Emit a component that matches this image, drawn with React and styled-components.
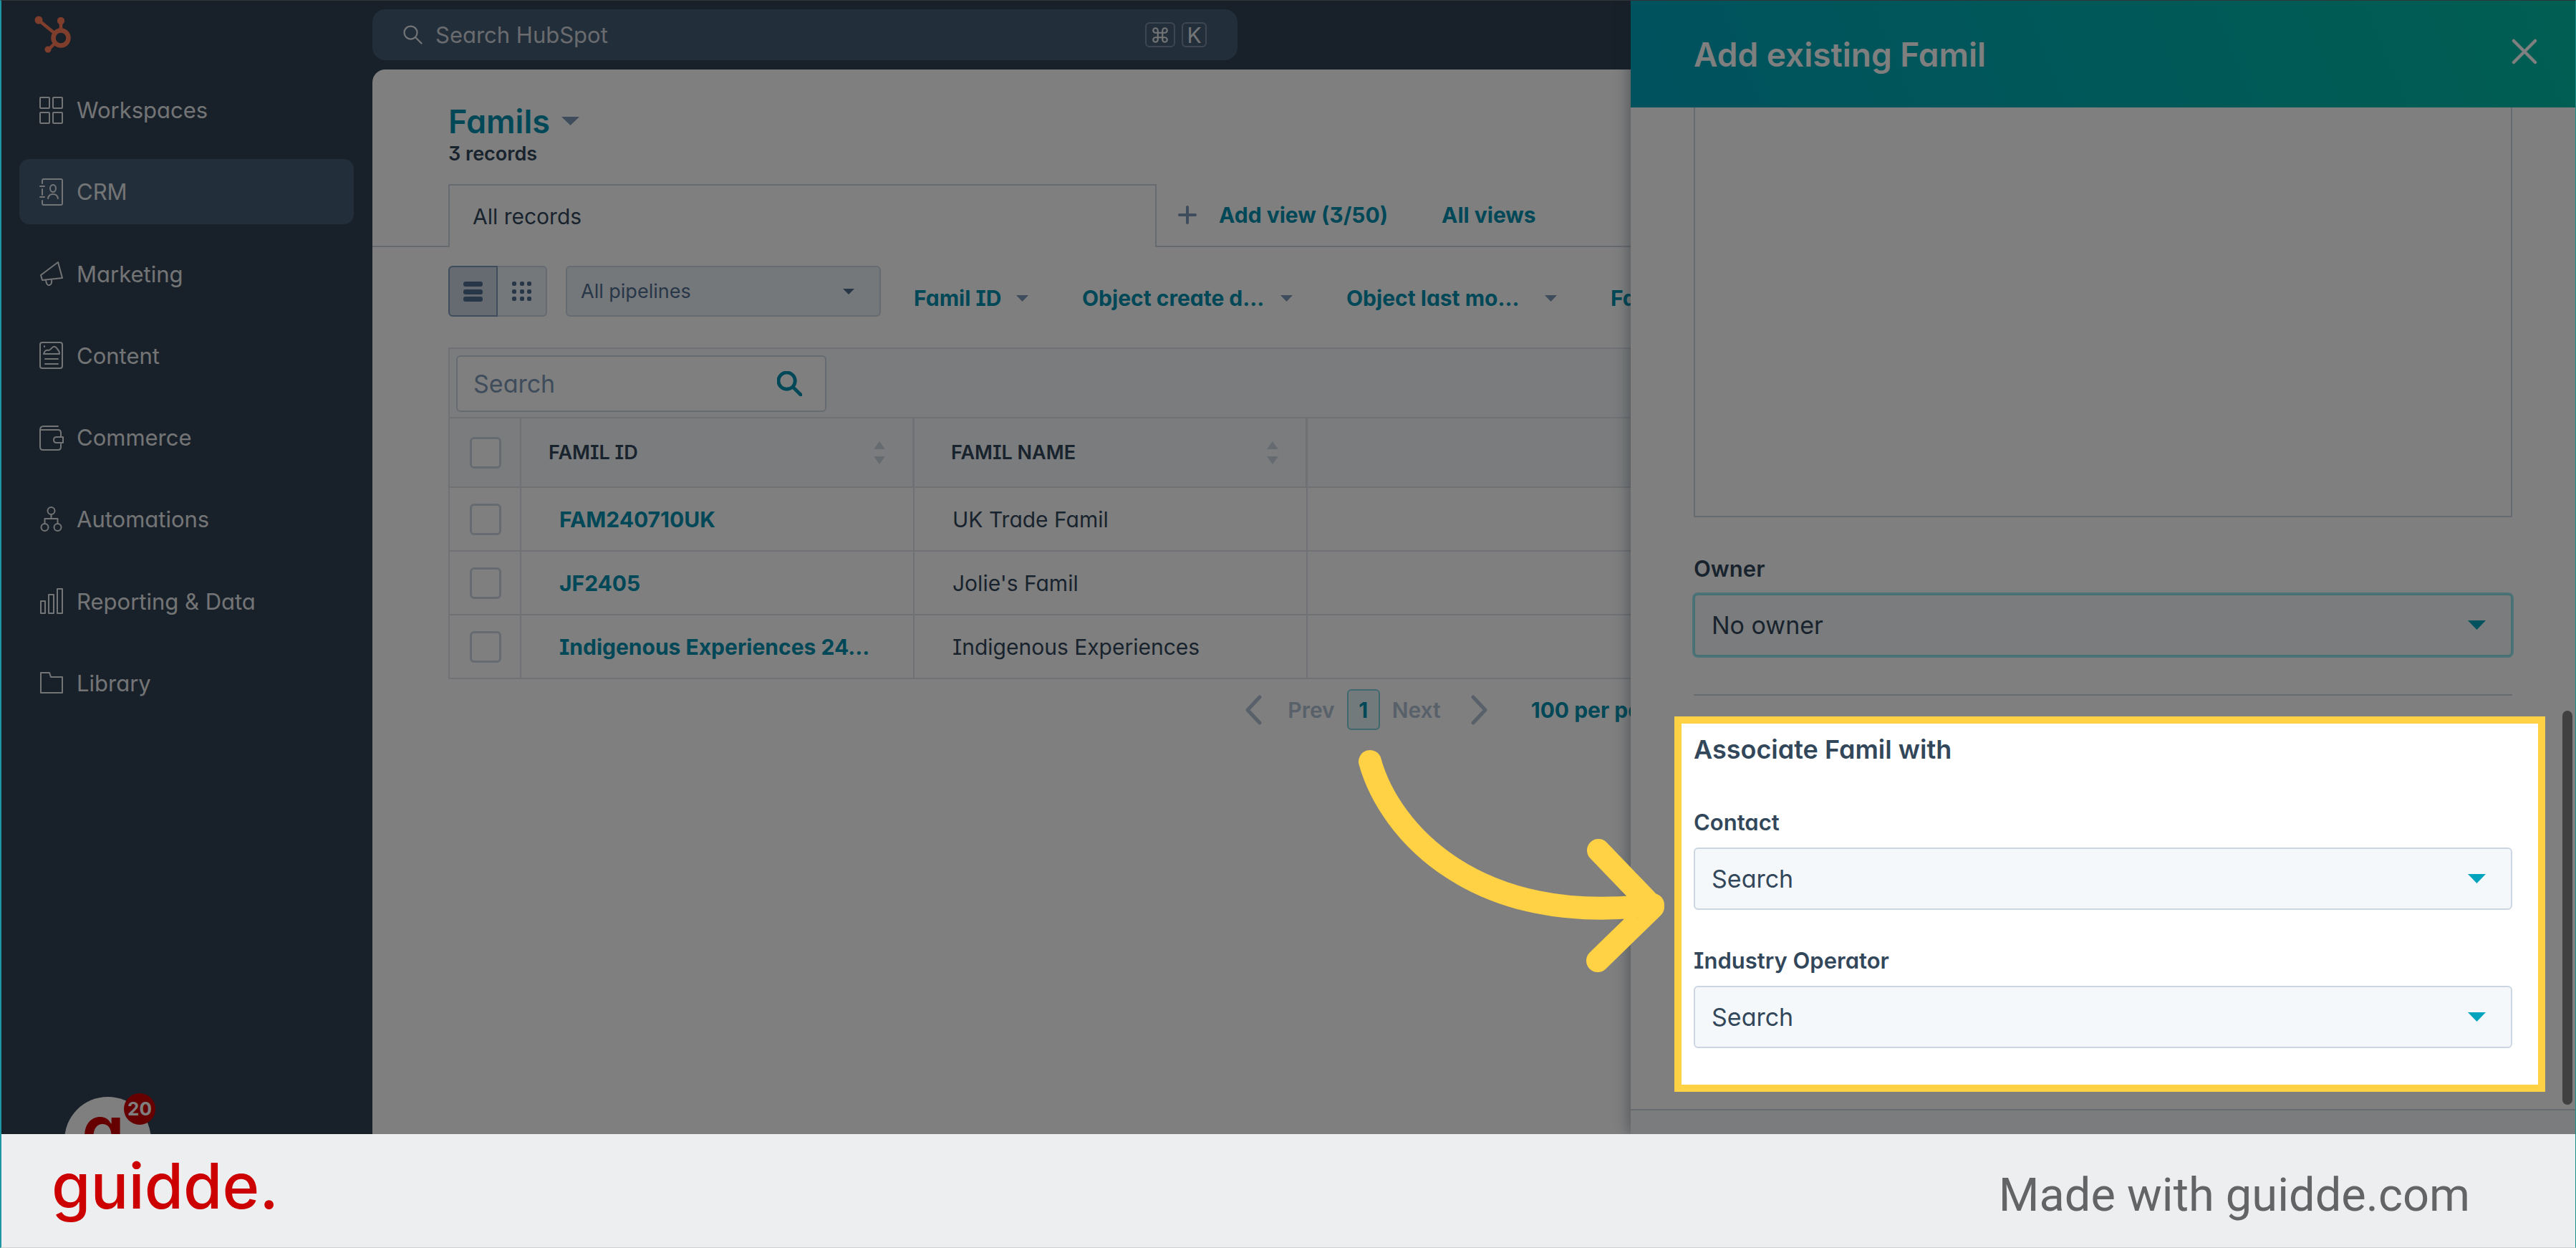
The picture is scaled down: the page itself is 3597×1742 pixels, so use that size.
import React from "react";
import styled, { createGlobalStyle, css } from "styled-components";
import { Command } from "lucide-react";

const c = {
  navy: "#304152",
  slate: "#445c74",
  ink: "#33475b",
  teal: "#0091ae",
  aqua: "#00a4bd",
  line: "#cbd6e2",
  hair: "#dfe3eb",
  panel: "#f5f8fa",
  muted: "#7c98b6",
  snow: "#e6e8eb",
  yellow: "#ffd144",
  red: "#cc0000",
};

const Global = createGlobalStyle`
  * { box-sizing: border-box; }
  body { margin: 0; background: #fff; }
  body, button, input, select, textarea {
    font-family: Inter, "Open Sans", sans-serif;
    font-feature-settings: "cv08", "cv09", "cv11";
  }
`;

const buttonReset = css`
  border: 0;
  padding: 0;
  background: none;
  color: inherit;
  cursor: pointer;
`;

const Page = styled.div`
  display: flex;
  flex-direction: column;
  height: 100vh;
  overflow: hidden;
  border: solid;
  border-width: 1px 1px 1px 2px;
  border-color: #2f3538 #1d8f8a #cfd1d3 #1d95a2;
`;

const Workspace = styled.div`
  position: relative;
  flex: 1;
  min-height: 0;
  display: flex;
  overflow: hidden;
  background: ${c.navy};
  color: ${c.ink};
`;

/* ---------- sidebar ---------- */

const Sidebar = styled.aside`
  flex: none;
  width: 518px;
  padding: 21px 26px 0 25px;
`;

const Logo = styled.a`
  display: block;
  height: 52px;
  margin: 0 0 34px 20px;
`;

const NavList = styled.nav`
  display: flex;
  flex-direction: column;
  justify-content: space-between;
  height: 891px;
`;

const NavItem = styled.a`
  display: flex;
  align-items: center;
  gap: 18px;
  height: 91px;
  padding: 0 28px;
  border-radius: 14px;
  background: ${(p) => (p.$active ? c.slate : "transparent")};
  color: ${c.snow};
  font-size: 31px;
  text-decoration: none;
`;

const NavIcon = styled.svg`
  flex: none;
  width: 34px;
  height: 38px;
  fill: none;
  stroke: currentColor;
  stroke-width: 2;
  stroke-linejoin: round;
  stroke-linecap: round;
`;

const Assistant = styled.button`
  ${buttonReset}
  position: absolute;
  left: 88px;
  bottom: -69px;
  width: 121px;
  height: 121px;
  padding-right: 13px;
  border-radius: 50%;
  background: #fff;
  color: ${c.red};
  font-size: 96px;
  font-weight: 600;
  line-height: 56px;
  padding-bottom: 30px;
`;

const Badge = styled.span`
  position: absolute;
  top: -5px;
  right: -6px;
  width: 44px;
  height: 44px;
  border-radius: 50%;
  background: ${c.red};
  color: #fff;
  font-size: 26px;
  font-weight: 700;
  line-height: 44px;
  text-align: center;
`;

/* ---------- top bar ---------- */

const Column = styled.div`
  flex: 1;
  min-width: 0;
  display: flex;
  flex-direction: column;
`;

const TopBar = styled.header`
  flex: none;
  height: 96px;
  padding-top: 12px;
`;

const GlobalSearch = styled.label`
  display: flex;
  align-items: center;
  width: 1208px;
  height: 71px;
  padding: 0 43px;
  border-radius: 18px;
  background: ${c.slate};
  color: ${c.snow};
`;

const GlobalInput = styled.input`
  flex: 1;
  min-width: 0;
  margin-left: 18px;
  padding: 0;
  border: 0;
  outline: 0;
  background: none;
  font-size: 31px;
  &::placeholder { color: #d3d7dc; opacity: 1; }
`;

const Key = styled.kbd`
  display: flex;
  align-items: center;
  justify-content: center;
  width: ${(p) => p.$w}px;
  height: 35px;
  margin-left: 9px;
  border: 2px solid #7c8fa3;
  border-radius: 6px;
  font: 30px Inter, sans-serif;
`;

/* ---------- main ---------- */

const Main = styled.main`
  flex: 1;
  min-height: 0;
  background: #fff;
  border-top-left-radius: 18px;
  overflow: hidden;
`;

const Heading = styled.div`
  padding: 46px 0 24px 106px;
`;

const TitleButton = styled.button`
  ${buttonReset}
  display: flex;
  align-items: center;
  gap: 16px;
  height: 52px;
  color: ${c.teal};
  font-size: 45px;
  font-weight: 600;
`;

const Count = styled.div`
  margin-top: 2px;
  font-size: 27px;
  font-weight: 600;
  line-height: 36px;
`;

const TabRow = styled.div`
  display: flex;
  height: 88px;
  font-size: 31px;
`;

const TabLead = styled.div`
  flex: none;
  width: 106px;
  border-bottom: 2px solid ${c.line};
`;

const Tab = styled.button`
  ${buttonReset}
  width: 989px;
  padding: 0 32px;
  border: 2px solid ${c.line};
  border-bottom: 0;
  font-size: 30px;
  text-align: left;
`;

const TabRest = styled.div`
  flex: 1;
  display: flex;
  align-items: center;
  gap: 75px;
  padding-left: 30px;
  border-bottom: 2px solid ${c.line};
`;

const LinkButton = styled.button`
  ${buttonReset}
  display: flex;
  align-items: center;
  justify-content: space-between;
  width: ${(p) => (p.$w ? p.$w + "px" : "auto")};
  height: 52px;
  color: ${c.teal};
  font-size: 30px;
  font-weight: 700;
  white-space: nowrap;
`;

const Toolbar = styled.div`
  display: flex;
  align-items: flex-end;
  height: 71px;
  margin: 26px 0 43px 106px;
`;

const ToggleGroup = styled.div`
  display: flex;
  margin-right: 26px;
`;

const ViewToggle = styled.button`
  ${buttonReset}
  display: flex;
  align-items: center;
  justify-content: center;
  width: 69px;
  height: 71px;
  border: 2px solid ${(p) => (p.$on ? c.muted : c.line)};
  border-left-width: ${(p) => (p.$on ? 2 : 0)}px;
  border-radius: ${(p) => (p.$on ? "6px 0 0 6px" : "0 6px 6px 0")};
  background: ${(p) => (p.$on ? c.line : "#eaf0f6")};
  color: #506e91;
`;

const SelectBox = styled.div`
  position: relative;
  display: flex;
  align-items: center;
  width: ${(p) => (p.$w ? p.$w + "px" : "100%")};
`;

const CaretSlot = styled.span`
  position: absolute;
  right: 37px;
  display: flex;
  color: ${(p) => p.$color};
  pointer-events: none;
`;

const Picker = styled.select`
  appearance: none;
  width: 100%;
  height: ${(p) => (p.$small ? 71 : 87)}px;
  padding: 0 80px 0 ${(p) => (p.$small ? 19 : 23)}px;
  border: 2px solid ${(p) => (p.$focus ? "#8fe0ea" : c.line)};
  border-radius: 6px;
  outline: 0;
  background: ${(p) => (p.$small ? "#eaf0f6" : c.panel)};
  box-shadow: ${(p) => (p.$focus ? "0 0 0 2px #9be5ee" : "none")};
  color: ${(p) => (p.$small ? "#506e91" : c.ink)};
  font-size: ${(p) => (p.$small ? 27 : 34)}px;
`;

const Filters = styled.div`
  display: flex;
  gap: 75px;
  margin-left: 46px;
`;

/* ---------- records table ---------- */

const TableFrame = styled.div`
  margin: 0 60px 0 106px;
  border: 2px solid ${c.hair};
  border-bottom: 0;
`;

const TableTools = styled.div`
  height: 97px;
  padding: 9px;
  background: ${c.panel};
  border-bottom: 2px solid ${c.hair};
`;

const TableSearch = styled.label`
  display: flex;
  align-items: center;
  width: 517px;
  height: 79px;
  padding: 0 32px 0 22px;
  border: 2px solid ${c.line};
  border-radius: 6px;
  background: #fff;
  color: ${c.teal};
`;

const TableInput = styled.input`
  flex: 1;
  min-width: 0;
  padding: 0;
  border: 0;
  outline: 0;
  background: none;
  font-size: 34px;
  &::placeholder { color: ${c.muted}; opacity: 1; }
`;

const Table = styled.table`
  width: 100%;
  table-layout: fixed;
  border-collapse: separate;
  border-spacing: 0;
`;

const Th = styled.th`
  width: ${(p) => (p.$w ? p.$w + "px" : "auto")};
  height: 97px;
  padding: 0 38px;
  padding-left: ${(p) => (p.$check ? 28 : p.$pad || 38)}px;
  border-right: ${(p) => (p.$check ? 2 : 3)}px solid ${c.hair};
  border-bottom: 2px solid ${c.hair};
  background: ${c.panel};
  font-size: 27px;
  font-weight: 600;
  text-align: left;
`;

const HeadCell = styled.div`
  display: flex;
  align-items: center;
  justify-content: space-between;
`;

const Td = styled.td`
  height: ${(p) => (p.$h ? p.$h : 89)}px;
  padding: 0 0 0 ${(p) => (p.$check ? 28 : 53)}px;
  border-right: 2px solid ${c.hair};
  border-bottom: 2px solid ${c.hair};
  font-size: 30px;
  white-space: nowrap;
`;

const RecordLink = styled.a`
  color: ${c.teal};
  font-weight: 700;
  text-decoration: none;
`;

const Check = styled.input`
  appearance: none;
  display: block;
  width: 44px;
  height: 44px;
  margin: 0;
  border: 3px solid ${c.line};
  border-radius: 6px;
  background: #fff;
`;

const Pager = styled.div`
  display: flex;
  align-items: center;
  justify-content: center;
  margin-top: 14px;
  color: #b0c1d4;
`;

const PagerStep = styled.button`
  ${buttonReset}
  display: flex;
  align-items: center;
  gap: ${(p) => p.$gap}px;
  font-size: 30px;
  font-weight: 600;
`;

const PageNumber = styled.button`
  ${buttonReset}
  width: 46px;
  height: 57px;
  margin: 0 17px;
  border: 2px solid #7fd1de;
  border-radius: 6px;
  background: #e5f5f8;
  color: ${c.teal};
  font-size: 30px;
  font-weight: 700;
`;

const PageSize = styled.div`
  margin-left: 60px;
`;

/* ---------- drawer ---------- */

const Drawer = styled.section`
  position: absolute;
  top: 0;
  right: 0;
  bottom: 0;
  width: 1319px;
  display: flex;
  flex-direction: column;
  background: #fff;
  box-shadow: -2px 0 20px rgba(45, 62, 80, 0.45);
`;

const DrawerHead = styled.header`
  flex: none;
  display: flex;
  align-items: center;
  justify-content: space-between;
  height: 149px;
  padding: 0 53px 0 88px;
  background: linear-gradient(68deg, ${c.aqua}, #00bda5);
  color: #fff;
`;

const DrawerTitle = styled.h2`
  margin: 0;
  font-size: 46px;
  font-weight: 600;
`;

const CloseButton = styled.button`
  ${buttonReset}
  display: flex;
  margin-bottom: 8px;
`;

const DrawerBody = styled.div`
  flex: 1;
  min-height: 0;
  position: relative;
  padding: 0 88px;
  overflow: hidden;
`;

const Notes = styled.textarea`
  display: block;
  width: 100%;
  height: 572px;
  margin-bottom: 52px;
  border: 2px solid ${c.line};
  border-top: 0;
  background: #fff;
  resize: none;
`;

const Field = styled.div`
  display: flex;
  flex-direction: column;
  gap: 15px;
  margin-bottom: ${(p) => p.$after}px;
`;

const FieldLabel = styled.label`
  font-size: 31px;
  font-weight: 600;
  line-height: 40px;
`;

const Divider = styled.hr`
  height: 2px;
  margin: 0 0 53px;
  border: 0;
  background: ${c.line};
`;

const GroupTitle = styled.h3`
  margin: 0 0 60px;
  font-size: 36px;
  font-weight: 600;
  line-height: 44px;
`;

const ScrollThumb = styled.div`
  position: absolute;
  top: 842px;
  right: 4px;
  bottom: 6px;
  width: 14px;
  border-radius: 7px;
  background: #808080;
`;

const DrawerFoot = styled.footer`
  flex: none;
  height: 35px;
  border-top: 2px solid ${c.line};
  background: ${c.panel};
`;

/* ---------- walkthrough layer ---------- */

const Spotlight = styled.div`
  position: absolute;
  top: 999px;
  right: 42px;
  width: 1216px;
  height: 524px;
  border: 10px solid ${c.yellow};
  box-shadow: 0 0 0 4000px rgba(0, 0, 0, 0.5);
  pointer-events: none;
`;

const Arrow = styled.svg`
  position: absolute;
  top: 1039px;
  right: 1266px;
  width: 440px;
  height: 330px;
  fill: none;
  stroke: ${c.yellow};
  stroke-width: 32;
  stroke-linecap: round;
  stroke-linejoin: round;
  pointer-events: none;
`;

const BrandBar = styled.footer`
  flex: none;
  display: flex;
  align-items: center;
  justify-content: space-between;
  height: 158px;
  padding: 0 147px 0 70px;
  background: #edeeef;
`;

const BrandName = styled.a`
  margin-bottom: 14px;
  color: ${c.red};
  font-size: 88px;
  font-weight: 500;
  line-height: 100px;
  text-decoration: none;
`;

const MadeWith = styled.span`
  margin-top: 12px;
  color: #636466;
  font: 65px/80px Roboto, sans-serif;
`;

const Tone = styled.span`
  display: flex;
  color: ${c.muted};
`;

const Caret = ({ w = 17, h = 9 }) => (
  <svg width={w} height={h} viewBox="0 0 10 5" preserveAspectRatio="none" fill="currentColor" aria-hidden="true">
    <path d="M0 0h10L5 5z" />
  </svg>
);

const Sort = () => (
  <svg width="16" height="32" viewBox="0 0 16 32" fill="#cbd6e2" aria-hidden="true">
    <path d="M8 0l8 11H0zM8 32l8-11H0z" />
  </svg>
);

const Magnifier = ({ size, stroke }) => (
  <svg width={size} height={size} viewBox="0 0 36 36" fill="none" stroke="currentColor" strokeWidth={stroke} strokeLinecap="round" aria-hidden="true">
    <circle cx="14" cy="14" r="12" />
    <path d="M23 23l11 11" />
  </svg>
);

const Chevron = ({ d }) => (
  <svg width="24" height="42" viewBox="0 0 24 42" fill="none" stroke="currentColor" strokeWidth="5" strokeLinecap="round" strokeLinejoin="round" aria-hidden="true">
    <path d={d} />
  </svg>
);

const nav = [
  ["Workspaces", <><rect x="1" y="1" width="13" height="15" rx="1" /><rect x="19" y="1" width="13" height="15" rx="1" /><rect x="1" y="22" width="13" height="15" rx="1" /><rect x="19" y="22" width="13" height="15" rx="1" /></>],
  ["CRM", <><path d="M4 7V3q0-2 2-2h24q2 0 2 2v32q0 2-2 2H6q-2 0-2-2v-4M4 15v8M1 11h6M1 26h6" /><ellipse cx="19" cy="14" rx="4" ry="5" /><path d="M12 28q1-6 7-6t7 6" /></>],
  ["Marketing", <path d="M2 21L26 3l6 22-28 3zM9 28q1 8 5 7 4-1 3-8" />],
  ["Content", <><rect x="1" y="1" width="31" height="36" rx="3" /><path d="M6 17q2-6 6-5 3 0 5-3 4-5 8 1 3 3 3 7zM7 6v1M8 24h18M8 31h18" /></>],
  ["Commerce", <><path d="M26 3H6Q1 3 1 8v24q0 4 4 4h21q4 0 4-4v-4M2 8h24q4 0 4 4v5" /><path d="M24 18h9v8h-9q-4 0-4-4t4-4z" /></>],
  ["Automations", <><circle cx="16.500" cy="7" r="5" /><circle cx="7.500" cy="30" r="5" /><circle cx="25.500" cy="30" r="5" /><path d="M16.500 12v6M7.500 25v-7h18v7" /></>],
  ["Reporting & Data", <path d="M2 19h6v17H2zM13 10h7v26h-7zM25 2h7v34h-7z" />],
  ["Library", <path d="M2 33V5h12l2 6h16v22z" />],
];

const records = [
  ["FAM240710UK", "UK Trade Famil"],
  ["JF2405", "Jolie's Famil"],
  ["Indigenous Experiences 24...", "Indigenous Experiences"],
];

const filters = [
  ["Famil ID", 160],
  ["Object create d...", 294],
  ["Object last mo...", 294],
  ["Famil", 160],
];

function CaretTone({ small }) {
  return <Tone>{small ? <Caret /> : <Caret w={25} h={12} />}</Tone>;
}

function SearchField({ id, label, value, focus, after }) {
  return (
    <Field $after={after}>
      <FieldLabel htmlFor={id}>{label}</FieldLabel>
      <SelectBox>
        <Picker id={id} $focus={focus}>
          <option>{value}</option>
        </Picker>
        <CaretSlot $color={c.aqua}><Caret w={25} h={13} /></CaretSlot>
      </SelectBox>
    </Field>
  );
}

export default function App() {
  return (
    <Page>
      <Global />
      <Workspace>
        <Sidebar>
          <Logo href="#" aria-label="HubSpot">
            <svg width="52" height="52" viewBox="0 0 52 52" fill="none" stroke="#ff7a59" aria-hidden="true">
              <circle cx="38" cy="31" r="10.500" strokeWidth="6.500" />
              <path d="M38 20V8M8 7l22 18M30 38l-10 10" strokeWidth="4.500" />
              <g fill="#ff7a59" stroke="none">
                <circle cx="38" cy="7" r="5.200" />
                <circle cx="7" cy="6" r="5.500" />
                <circle cx="20" cy="47" r="4.500" />
              </g>
            </svg>
          </Logo>
          <NavList>
            {nav.map(([name, icon]) => (
              <NavItem key={name} href="#" $active={name === "CRM"}>
                <NavIcon viewBox="0 0 34 38" aria-hidden="true">{icon}</NavIcon>
                {name}
              </NavItem>
            ))}
          </NavList>
          <Assistant>
            g<Badge>20</Badge>
          </Assistant>
        </Sidebar>

        <Column>
          <TopBar>
            <GlobalSearch>
              <Magnifier size={27} stroke={3} />
              <GlobalInput type="search" placeholder="Search HubSpot" aria-label="Search HubSpot" />
              <Key $w={42}><Command size={26} strokeWidth={2} /></Key>
              <Key $w={35}>K</Key>
            </GlobalSearch>
          </TopBar>

          <Main>
            <Heading>
              <TitleButton>Famils <CaretTone /></TitleButton>
              <Count>3 records</Count>
            </Heading>

            <TabRow>
              <TabLead />
              <Tab>All records</Tab>
              <TabRest>
                <LinkButton $w={293}>
                  <svg width="26" height="26" viewBox="0 0 26 26" stroke={c.muted} strokeWidth="4" strokeLinecap="round" aria-hidden="true">
                    <path d="M13 2v22M2 13h22" />
                  </svg>
                  Add view (3/50)
                </LinkButton>
                <LinkButton>All views</LinkButton>
              </TabRest>
            </TabRow>

            <Toolbar>
              <ToggleGroup>
                <ViewToggle $on aria-label="List view">
                  <svg width="27" height="28" fill="currentColor" aria-hidden="true">
                    {[0, 11, 21].map((y) => <rect key={y} y={y} width="27" height="7" rx="3" />)}
                  </svg>
                </ViewToggle>
                <ViewToggle aria-label="Board view">
                  <svg width="28" height="28" fill="currentColor" aria-hidden="true">
                    {[0, 11, 21].map((y) => [0, 11, 21].map((x) => <rect key={x + "-" + y} x={x} y={y} width="6" height="6" rx="2" />))}
                  </svg>
                </ViewToggle>
              </ToggleGroup>
              <SelectBox $w={440}>
                <Picker $small aria-label="Pipeline">
                  <option>All pipelines</option>
                </Picker>
                <CaretSlot $color="#506e91"><Caret w={16} h={8} /></CaretSlot>
              </SelectBox>
              <Filters>
                {filters.map(([name, w]) => (
                  <LinkButton key={name} $w={w}>{name} <CaretTone small /></LinkButton>
                ))}
              </Filters>
            </Toolbar>

            <TableFrame>
              <TableTools>
                <TableSearch>
                  <TableInput type="search" placeholder="Search" aria-label="Search records" />
                  <Magnifier size={35} stroke={5} />
                </TableSearch>
              </TableTools>
              <Table>
                <thead>
                  <tr>
                    <Th $w={100} $check><Check type="checkbox" aria-label="Select all" /></Th>
                    <Th $w={549}><HeadCell>FAMIL ID <Sort /></HeadCell></Th>
                    <Th $w={549} $pad={51}><HeadCell>FAMIL NAME <Sort /></HeadCell></Th>
                    <Th />
                  </tr>
                </thead>
                <tbody>
                  {records.map(([id, name]) => (
                    <tr key={id}>
                      <Td $check><Check type="checkbox" aria-label={id} /></Td>
                      <Td><RecordLink href="#">{id}</RecordLink></Td>
                      <Td>{name}</Td>
                      <Td />
                    </tr>
                  ))}
                </tbody>
              </Table>
            </TableFrame>

            <Pager>
              <PagerStep $gap={36}><Chevron d="M21 3L4 21l17 18" /> Prev</PagerStep>
              <PageNumber>1</PageNumber>
              <PagerStep $gap={42}>Next <Chevron d="M3 3l17 18L3 39" /></PagerStep>
              <PageSize>
                <LinkButton $w={240}>100 per page <CaretTone small /></LinkButton>
              </PageSize>
            </Pager>
          </Main>
        </Column>

        <Drawer>
          <DrawerHead>
            <DrawerTitle>Add existing Famil</DrawerTitle>
            <CloseButton aria-label="Close">
              <svg width="36" height="36" viewBox="0 0 36 36" stroke="#fff" strokeWidth="4.500" strokeLinecap="round" aria-hidden="true">
                <path d="M3 3l30 30M33 3L3 33" />
              </svg>
            </CloseButton>
          </DrawerHead>
          <DrawerBody>
            <Notes aria-label="Notes" />
            <SearchField id="owner" label="Owner" value="No owner" focus after={53} />
            <Divider />
            <GroupTitle>Associate Famil with</GroupTitle>
            <SearchField id="contact" label="Contact" value="Search" after={51} />
            <SearchField id="operator" label="Industry Operator" value="Search" after={0} />
            <ScrollThumb />
          </DrawerBody>
          <DrawerFoot />
        </Drawer>

        <Spotlight />
        <Arrow viewBox="1890 1040 440 330" aria-hidden="true">
          <path d="M1913 1063C1940 1160 2060 1295 2308 1263M2232 1187l76 79-77 75" />
        </Arrow>
      </Workspace>

      <BrandBar>
        <BrandName href="#">guidde.</BrandName>
        <MadeWith>Made with guidde.com</MadeWith>
      </BrandBar>
    </Page>
  );
}
